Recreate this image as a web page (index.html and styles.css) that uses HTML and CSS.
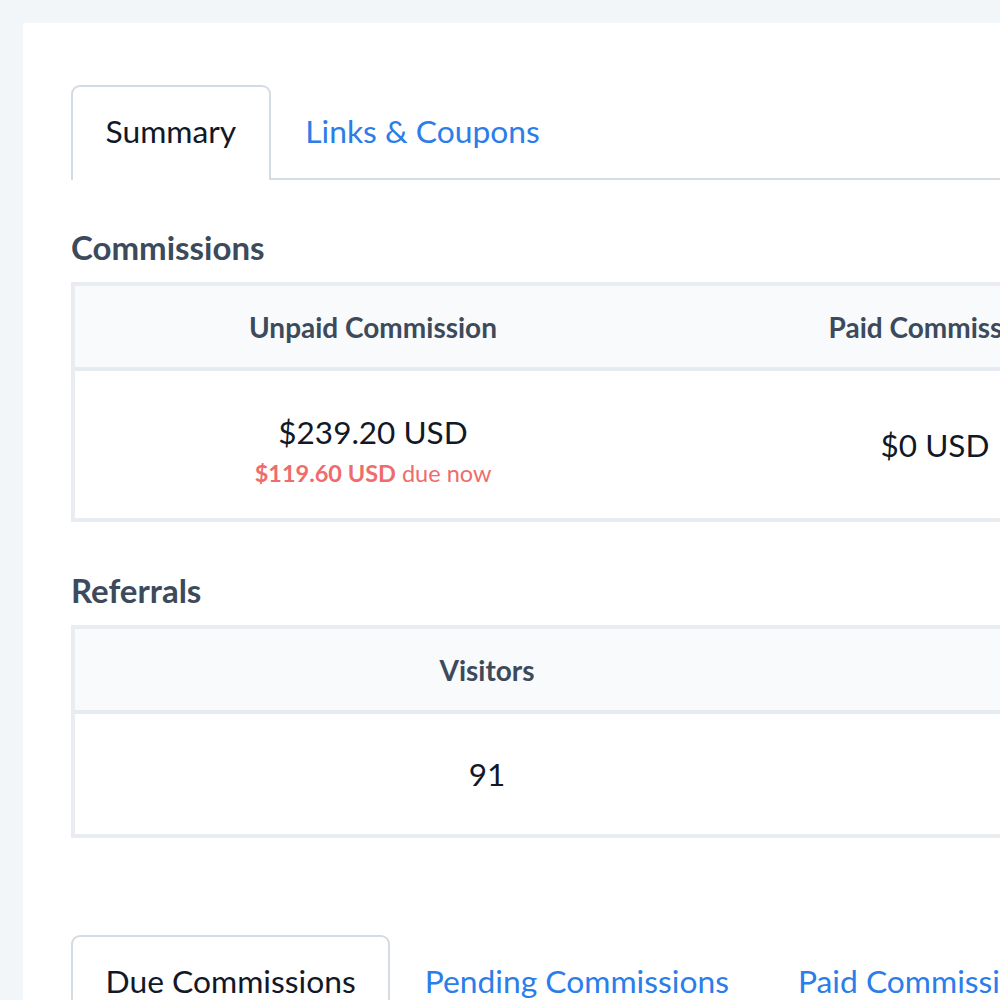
FILE: index.html
```html
<!DOCTYPE html>
<html>
<head>
<meta charset="utf-8">
<link rel="stylesheet" href="styles.css">
</head>
<body>
<div class="card">
  <div class="tabs">
    <div class="tab active">Summary</div>
    <div class="tab">Links &amp; Coupons</div>
  </div>

  <h2 class="heading first">Commissions</h2>
  <div class="stats commissions">
    <div class="th">Unpaid Commission</div>
    <div class="th">Paid Commission</div>
    <div class="th">Total Commission</div>
    <div class="td td-top">
      <div class="value">$239.20 USD</div>
      <div class="due"><strong>$119.60 USD</strong> due now</div>
    </div>
    <div class="td td-mid"><div class="value">$0 USD</div></div>
    <div class="td td-mid"><div class="value">$239.20 USD</div></div>
  </div>

  <h2 class="heading">Referrals</h2>
  <div class="stats referrals">
    <div class="th">Visitors</div>
    <div class="th">Conversions</div>
    <div class="td td-mid ref"><div class="value">91</div></div>
    <div class="td td-mid ref"><div class="value">4</div></div>
  </div>

  <div class="tabs lower">
    <div class="tab active">Due Commissions</div>
    <div class="tab">Pending Commissions</div>
    <div class="tab">Paid Commissions</div>
  </div>
</div>
</body>
</html>
```
FILE: styles.css
```css
html, body {
  margin: 0;
  padding: 0;
  overflow: hidden;
}
body {
  background: #f3f6f9;
  font-family: Lato, "Noto Sans", sans-serif;
  color: #1a202c;
  width: 1000px;
  height: 1000px;
}
.card {
  margin: 23px 0 0 23px;
  width: 1500px;
  min-height: 1200px;
  background: #ffffff;
  padding: 62px 0 0 48px;
  box-sizing: border-box;
}
.tabs {
  display: flex;
  border-bottom: 2px solid #d5dbe3;
}
.tab {
  font-size: 31.8px;
  line-height: 40px;
  padding: 24px 32.5px 29px 32.5px;
  color: #2b7de9;
  border: 2px solid transparent;
  border-bottom: none;
  border-radius: 9px 9px 0 0;
  margin-bottom: -2px;
  white-space: nowrap;
}
.tab.active {
  color: #111827;
  border-color: #d5dbe3;
  background: #ffffff;
}
.heading {
  margin: 50px 0 17px 0;
  font-size: 33px;
  line-height: 36px;
  font-weight: 700;
  color: #3c4a5b;
}
.heading.first {
  margin-top: 49px;
}
.stats {
  display: grid;
  border: 4px solid #e9edf2;
  border-right: none;
}
.commissions {
  grid-template-columns: 596px 528px 1fr;
}
.referrals {
  grid-template-columns: 824px 1fr;
}
.th {
  height: 81px;
  background: #f8fafc;
  border-bottom: 4px solid #e6ebf1;
  display: flex;
  align-items: center;
  justify-content: center;
  font-size: 28px;
  font-weight: 700;
  color: #3c4a5b;
  white-space: nowrap;
}
.td {
  height: 147px;
  box-sizing: border-box;
  display: flex;
  flex-direction: column;
  align-items: center;
  text-align: center;
}
.td-top {
  padding-top: 41px;
}
.td-mid {
  justify-content: center;
}
.td.ref {
  height: 120px;
}
.value {
  font-size: 31.5px;
  line-height: 40px;
  color: #111827;
  white-space: nowrap;
}
.due {
  font-size: 23.5px;
  line-height: 42px;
  color: #f06b6b;
  white-space: nowrap;
}
.due strong {
  font-weight: 700;
}
.lower {
  margin-top: 97px;
}
```
